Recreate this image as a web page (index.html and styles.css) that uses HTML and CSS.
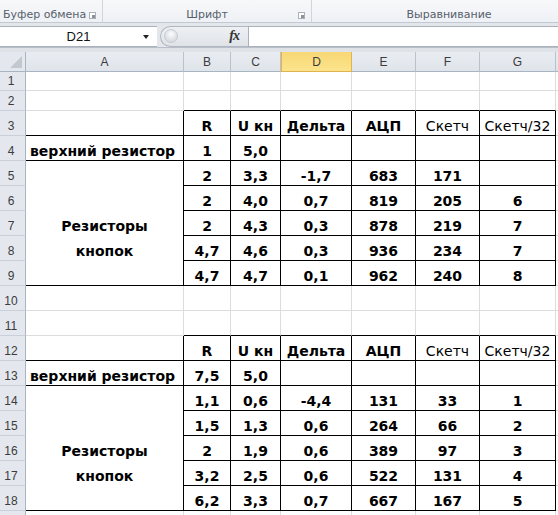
FILE: index.html
```html
<!DOCTYPE html>
<html lang="ru">
<head>
<meta charset="utf-8">
<title>Excel</title>
<link rel="stylesheet" href="styles.css">
</head>
<body>
<div class="app">
  <div class="ribbon">
    <div class="grp g1"><span class="glabel">Буфер обмена</span><span class="launch"></span></div>
    <div class="grp g2"><span class="glabel">Шрифт</span><span class="launch"></span></div>
    <div class="grp g3"><span class="glabel">Выравнивание</span></div>
  </div>
  <div class="fbar">
    <div class="namebox"><span class="nbtext">D21</span><span class="arrow"></span></div>
    <div class="fxzone"><span class="knob"></span><span class="fx">fx</span></div>
    <div class="finput"></div>
  </div>
  <div class="gap"></div>
  <div class="sheet">
    <div class="corner"><span class="tri"></span></div>
    <div class="ch">A</div><div class="ch">B</div><div class="ch">C</div><div class="ch sel">D</div><div class="ch">E</div><div class="ch">F</div><div class="ch">G</div><div class="ch"></div>

    <div class="rh">1</div><div class="c"></div><div class="c"></div><div class="c"></div><div class="c"></div><div class="c"></div><div class="c"></div><div class="c"></div><div class="c"></div>
    <div class="rh">2</div><div class="c"></div><div class="c bb"></div><div class="c bb"></div><div class="c bb"></div><div class="c bb"></div><div class="c bb"></div><div class="c bb"></div><div class="c"></div>

    <div class="rh">3</div><div class="c bb br"></div><div class="c bb br b">R</div><div class="c bb br b">U кн</div><div class="c bb br b">Дельта</div><div class="c bb br b">АЦП</div><div class="c bb br">Скетч</div><div class="c bb br">Скетч/32</div><div class="c"></div>
    <div class="rh">4</div><div class="c bb br b left">верхний резистор</div><div class="c bb br b">1</div><div class="c bb br b">5,0</div><div class="c bb br"></div><div class="c bb br"></div><div class="c bb br"></div><div class="c bb br"></div><div class="c"></div>
    <div class="rh">5</div><div class="c bb br merged b"><span>Резисторы</span><span>кнопок</span></div><div class="c bb br b">2</div><div class="c bb br b">3,3</div><div class="c bb br b">-1,7</div><div class="c bb br b">683</div><div class="c bb br b">171</div><div class="c bb br b"></div><div class="c"></div>
    <div class="rh">6</div><div class="c bb br b">2</div><div class="c bb br b">4,0</div><div class="c bb br b">0,7</div><div class="c bb br b">819</div><div class="c bb br b">205</div><div class="c bb br b">6</div><div class="c"></div>
    <div class="rh">7</div><div class="c bb br b">2</div><div class="c bb br b">4,3</div><div class="c bb br b">0,3</div><div class="c bb br b">878</div><div class="c bb br b">219</div><div class="c bb br b">7</div><div class="c"></div>
    <div class="rh">8</div><div class="c bb br b">4,7</div><div class="c bb br b">4,6</div><div class="c bb br b">0,3</div><div class="c bb br b">936</div><div class="c bb br b">234</div><div class="c bb br b">7</div><div class="c"></div>
    <div class="rh">9</div><div class="c bb br b">4,7</div><div class="c bb br b">4,7</div><div class="c bb br b">0,1</div><div class="c bb br b">962</div><div class="c bb br b">240</div><div class="c bb br b">8</div><div class="c"></div>

    <div class="rh">10</div><div class="c"></div><div class="c"></div><div class="c"></div><div class="c"></div><div class="c"></div><div class="c"></div><div class="c"></div><div class="c"></div>
    <div class="rh">11</div><div class="c"></div><div class="c bb"></div><div class="c bb"></div><div class="c bb"></div><div class="c bb"></div><div class="c bb"></div><div class="c bb"></div><div class="c"></div>

    <div class="rh">12</div><div class="c bb br"></div><div class="c bb br b">R</div><div class="c bb br b">U кн</div><div class="c bb br b">Дельта</div><div class="c bb br b">АЦП</div><div class="c bb br">Скетч</div><div class="c bb br">Скетч/32</div><div class="c"></div>
    <div class="rh">13</div><div class="c bb br b left">верхний резистор</div><div class="c bb br b">7,5</div><div class="c bb br b">5,0</div><div class="c bb br"></div><div class="c bb br"></div><div class="c bb br"></div><div class="c bb br"></div><div class="c"></div>
    <div class="rh">14</div><div class="c bb br merged b"><span>Резисторы</span><span>кнопок</span></div><div class="c bb br b">1,1</div><div class="c bb br b">0,6</div><div class="c bb br b">-4,4</div><div class="c bb br b">131</div><div class="c bb br b">33</div><div class="c bb br b">1</div><div class="c"></div>
    <div class="rh">15</div><div class="c bb br b">1,5</div><div class="c bb br b">1,3</div><div class="c bb br b">0,6</div><div class="c bb br b">264</div><div class="c bb br b">66</div><div class="c bb br b">2</div><div class="c"></div>
    <div class="rh">16</div><div class="c bb br b">2</div><div class="c bb br b">1,9</div><div class="c bb br b">0,6</div><div class="c bb br b">389</div><div class="c bb br b">97</div><div class="c bb br b">3</div><div class="c"></div>
    <div class="rh">17</div><div class="c bb br b">3,2</div><div class="c bb br b">2,5</div><div class="c bb br b">0,6</div><div class="c bb br b">522</div><div class="c bb br b">131</div><div class="c bb br b">4</div><div class="c"></div>
    <div class="rh">18</div><div class="c bb br b">6,2</div><div class="c bb br b">3,3</div><div class="c bb br b">0,7</div><div class="c bb br b">667</div><div class="c bb br b">167</div><div class="c bb br b">5</div><div class="c"></div>

    <div class="rh"></div><div class="c"></div><div class="c"></div><div class="c"></div><div class="c"></div><div class="c"></div><div class="c"></div><div class="c"></div><div class="c"></div>
  </div>
</div>
</body>
</html>
```
FILE: styles.css
```css
* { box-sizing: border-box; }
html, body { margin: 0; padding: 0; background: #ffffff; }
.app { width: 558px; height: 515px; overflow: hidden; }

.ribbon {
  height: 23px;
  display: flex;
  background: linear-gradient(#f7f8fa, #eef1f5);
  border-bottom: 1px solid #c3c9d1;
}
.grp {
  position: relative;
  display: flex;
  align-items: center;
  justify-content: center;
  border-right: 1px solid #d0d5dc;
  padding-top: 7px;
}
.g1 { width: 103px; justify-content: flex-start; padding-left: 3px; }
.g2 { width: 209px; }
.g3 { flex: 1; border-right: none; padding-left: 28px; }
.glabel {
  font-family: "DejaVu Sans", sans-serif;
  font-size: 11px;
  color: #56606c;
}
.launch {
  position: absolute;
  right: 6px;
  top: 12px;
  width: 7px;
  height: 7px;
  border: 1px solid #a9b0b8;
  background: #ffffff;
}
.launch::after {
  content: "";
  position: absolute;
  right: 0;
  bottom: 0;
  width: 3px;
  height: 3px;
  background: #8a929c;
}

.fbar {
  height: 24px;
  display: flex;
  background: #e3e7ec;
  padding-top: 3px;
}
.namebox {
  width: 157px;
  height: 21px;
  background: #ffffff;
  border-top: 1px solid #a9b1bb;
  border-bottom: 1px solid #a9b1bb;
  display: flex;
  align-items: center;
  position: relative;
}
.nbtext {
  font-family: "Liberation Sans", sans-serif;
  font-size: 13px;
  color: #111;
  width: 100%;
  text-align: center;
}
.arrow {
  position: absolute;
  right: 8px;
  top: 8px;
  border-left: 3px solid transparent;
  border-right: 3px solid transparent;
  border-top: 4px solid #222;
}
.fxzone {
  width: 88px;
  height: 21px;
  margin-left: 3px;
  background: linear-gradient(#eef0f3, #dfe3e8);
  border: 1px solid #b0b7c0;
  border-right: none;
  border-radius: 11px 0 0 11px;
  position: relative;
}
.knob {
  position: absolute;
  left: 3px;
  top: 2px;
  width: 14px;
  height: 14px;
  border-radius: 50%;
  background: radial-gradient(circle at 50% 35%, #fbfcfd, #c9ced5);
  border: 1px solid #c6ccd3;
}
.fx {
  position: absolute;
  right: 9px;
  top: 1px;
  font-family: "Liberation Serif", serif;
  font-style: italic;
  font-weight: bold;
  font-size: 14px;
  color: #333;
  letter-spacing: -1px;
}
.finput {
  flex: 1;
  height: 21px;
  background: #ffffff;
  border: 1px solid #a9b1bb;
  border-right: none;
}
.gap {
  height: 5px;
  background: #dfe3e8;
  border-top: 1px solid #b8bfc8;
}

.sheet {
  display: grid;
  grid-template-columns: 26px 158px 47px 50px 71px 64px 64px 76px 66px;
  grid-template-rows: 20px 19px 20px repeat(16, 25px) 25px;
  font-family: "DejaVu Sans", sans-serif;
}
.corner {
  background: #e4e8ee;
  border-right: 1px solid #a9b4c2;
  border-bottom: 1px solid #a9b4c2;
  position: relative;
}
.tri {
  position: absolute;
  right: 3px;
  bottom: 3px;
  width: 0;
  height: 0;
  border-left: 12px solid transparent;
  border-bottom: 12px solid #c2c8d0;
}
.ch {
  background: linear-gradient(#e9edf2, #dfe4ea);
  border-right: 1px solid #b8c1cc;
  border-bottom: 1px solid #a9b4c2;
  display: flex;
  align-items: center;
  justify-content: center;
  font-family: "Liberation Sans", sans-serif;
  font-size: 12px;
  color: #3c3c3c;
}
.ch.sel {
  background: linear-gradient(#f8d775, #fbe48c);
  border: 1px solid #e2b24e;
  border-top: none;
}
.rh {
  background: #e4e8ee;
  border-right: 1px solid #a9b4c2;
  border-bottom: 1px solid #c9d0d9;
  display: flex;
  align-items: flex-end;
  justify-content: center;
  padding-bottom: 2px;
  padding-right: 3px;
  font-family: "Liberation Sans", sans-serif;
  font-size: 12px;
  color: #3c3c3c;
}
.c {
  border-right: 1px solid #dadcdd;
  border-bottom: 1px solid #dadcdd;
  display: flex;
  align-items: flex-end;
  justify-content: center;
  padding-bottom: 0;
  font-size: 14px;
  line-height: 17px;
  color: #000;
  white-space: nowrap;
}
.c.b { font-weight: bold; }
.c.left { justify-content: flex-start; padding-left: 4px; }
.c.bb { border-bottom-color: #000; }
.c.br { border-right-color: #000; }
.merged {
  grid-row: span 5;
  flex-direction: column;
  align-items: center;
  justify-content: flex-end;
  padding-bottom: 25px;
}
.merged span {
  height: 25px;
  display: flex;
  align-items: flex-end;
  padding-bottom: 0;
}
```
